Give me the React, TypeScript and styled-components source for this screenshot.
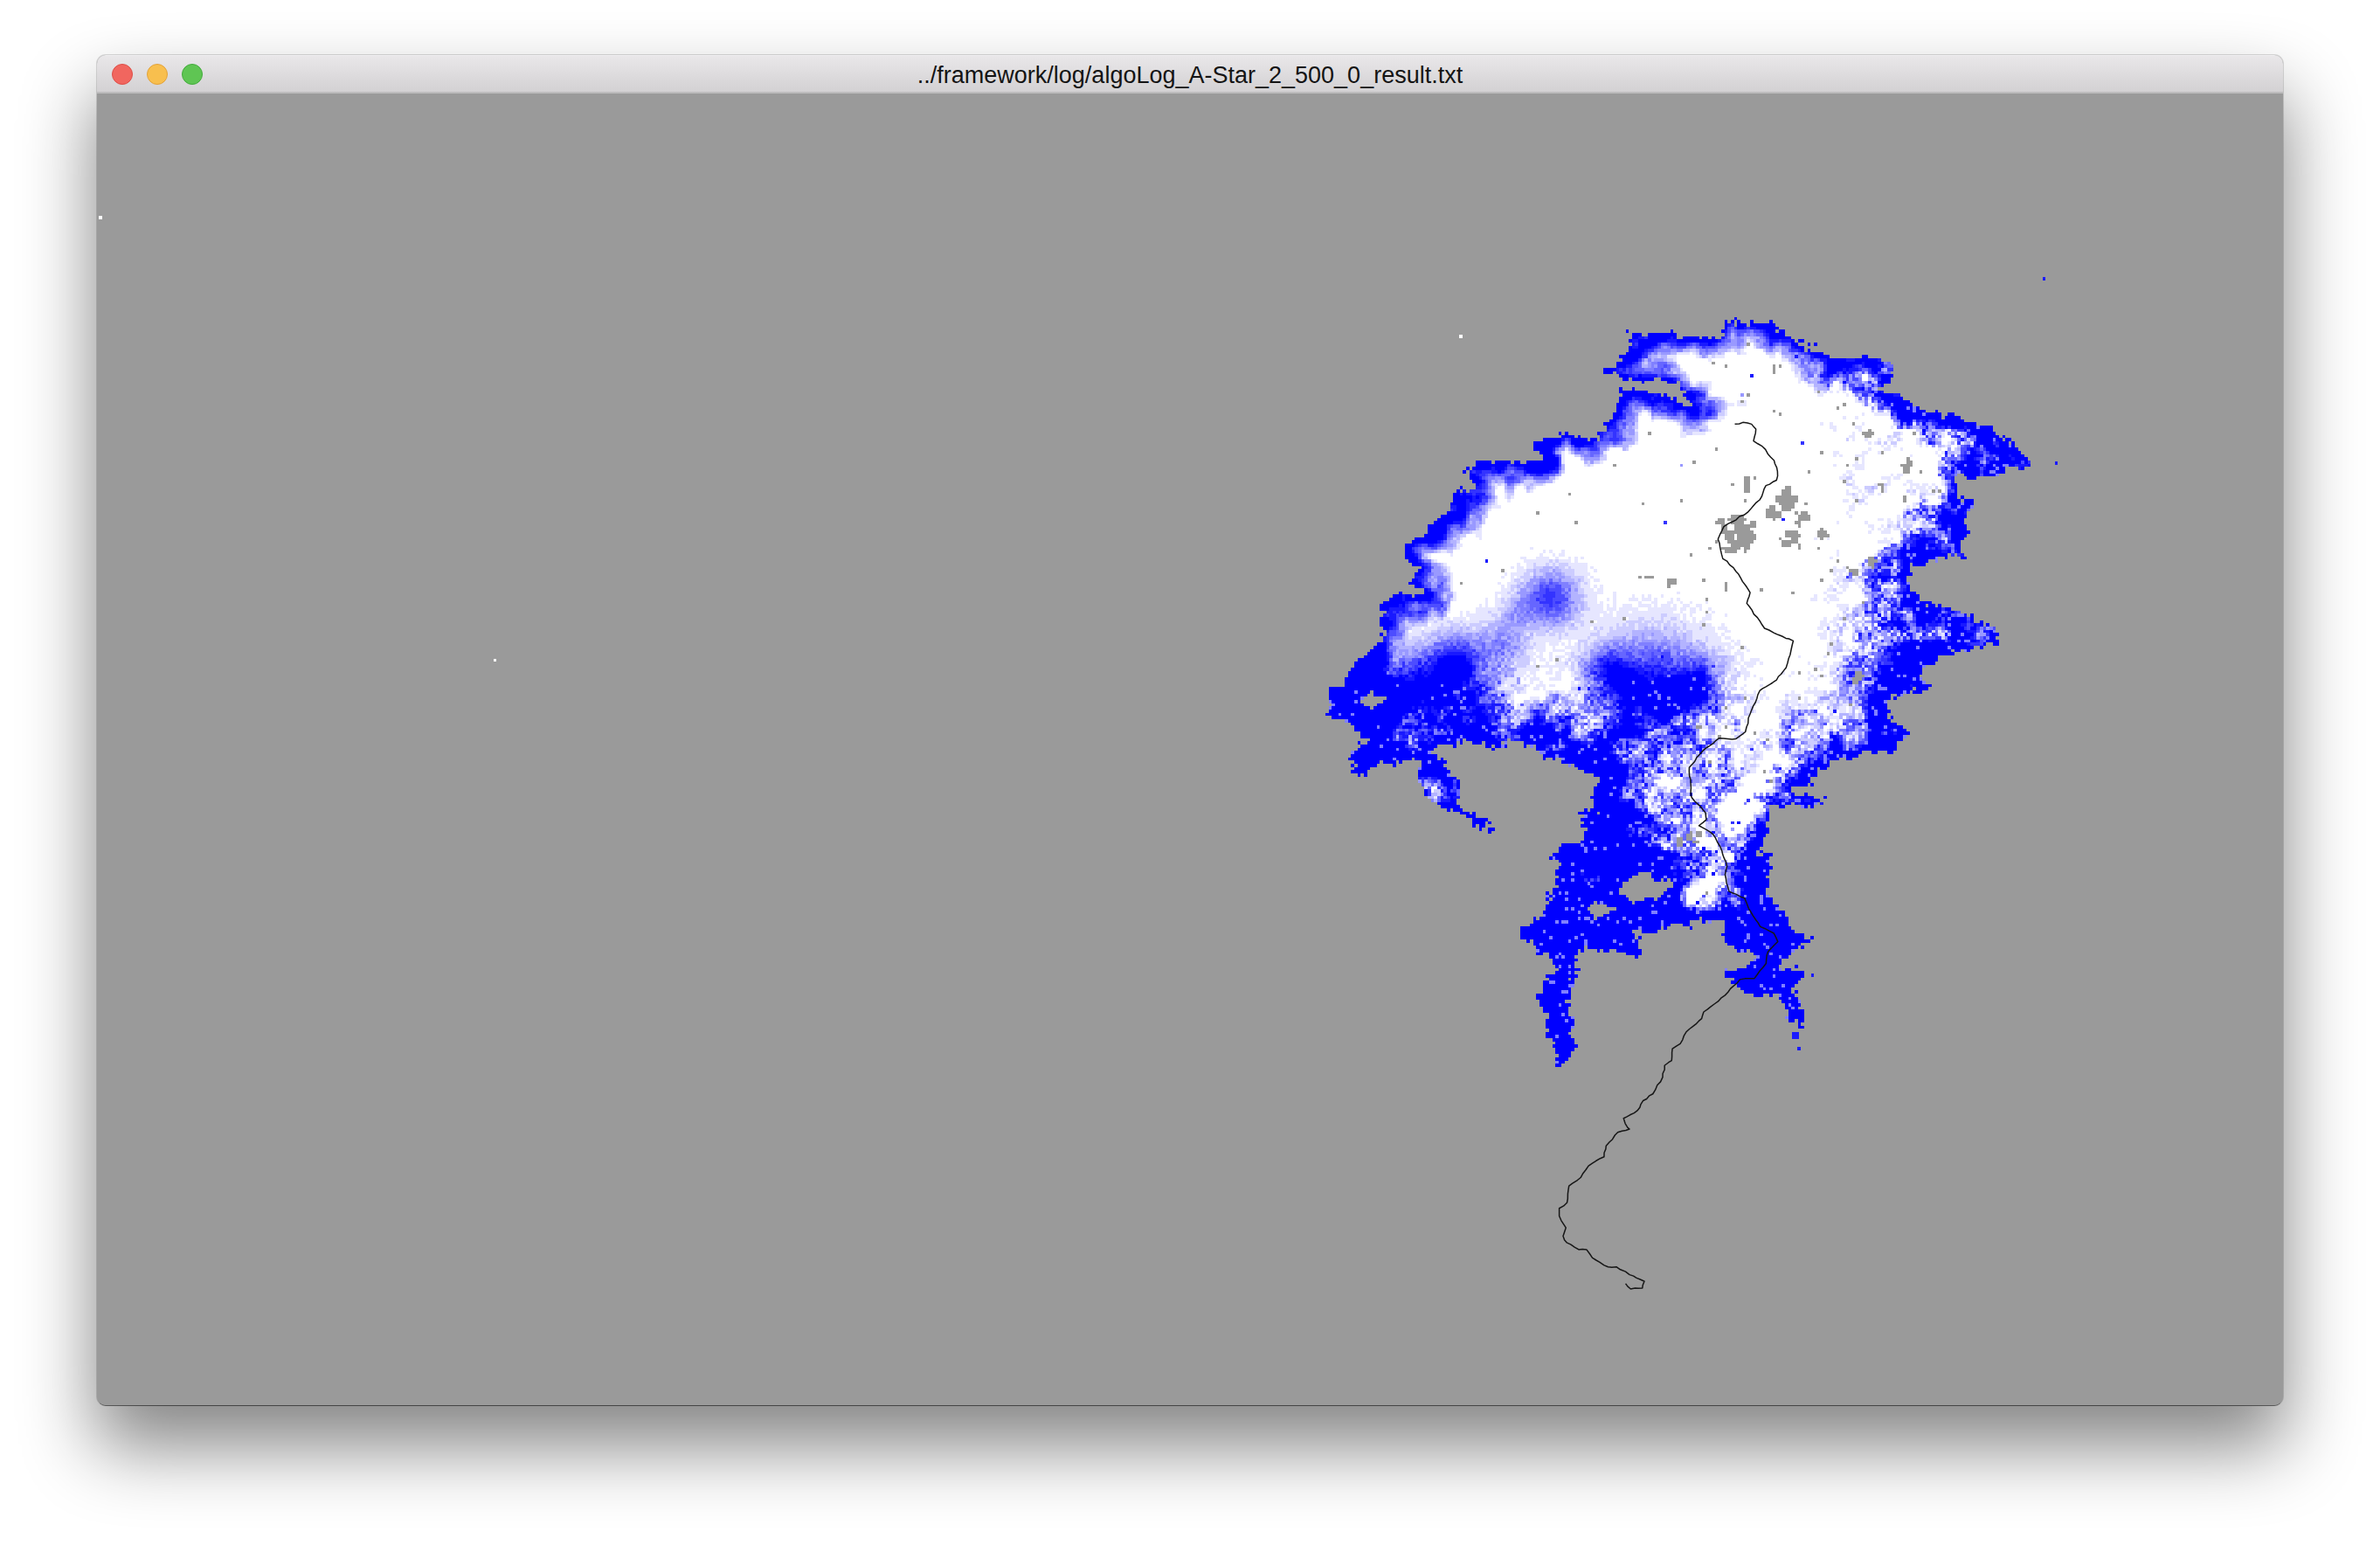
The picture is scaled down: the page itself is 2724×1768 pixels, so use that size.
import React from "react";
import styled, { createGlobalStyle } from "styled-components";

const GlobalStyle = createGlobalStyle`
  html, body { margin: 0; padding: 0; background: #ffffff; }
  #root { width: 2724px; height: 1768px; }
`;

const Page = styled.div`
  box-sizing: border-box;
  width: 2724px;
  height: 1768px;
  padding: 63px 111px 160px;
  background: #ffffff;
  overflow: hidden;
`;

const Window = styled.div`
  display: flex;
  flex-direction: column;
  height: 100%;
  border-radius: 10px;
  overflow: hidden;
  background: #9a9a9a;
  box-shadow: 0 0 0 1px rgba(0, 0, 0, 0.14), 0 2px 0 -1px rgba(0, 0, 0, 0.45),
    0 46px 84px 2px rgba(0, 0, 0, 0.48);
`;

const TitleBar = styled.header`
  flex: none;
  display: grid;
  grid-template-columns: 1fr auto 1fr;
  align-items: center;
  height: 44px;
  box-sizing: border-box;
  padding: 0 17px;
  background: linear-gradient(#e9e7e9, #d3d1d3);
  border-top: 1px solid #efeef0;
  border-bottom: 2px solid #bdbcbd;
`;

const Lights = styled.div`
  display: flex;
  gap: 16px;
`;

const Light = styled.span<{ $fill: string; $edge: string }>`
  box-sizing: border-box;
  width: 24px;
  height: 24px;
  border-radius: 50%;
  background: ${(p) => p.$fill};
  border: 1px solid ${(p) => p.$edge};
`;

const Title = styled.h1`
  margin: 0;
  padding-top: 2px;
  font: 400 27px/30px "Liberation Sans", Arial, sans-serif;
  color: #141414;
  white-space: nowrap;
`;

const Canvas = styled.main`
  flex: 1;
  min-height: 0;
  background: #9a9a9a;
`;

const MapDrawing = styled.svg`
  display: block;
  width: 100%;
  height: 100%;
`;

// ---------- drawing data ----------
type P = [number, number];
const OX = 111;
const OY = 108;
const CELL = 3.65;

const c3 = (x: number, y: number): P => [1500 + (x * 860) / 1568, 340 + (y * 640) / 1568];
const c4 = (x: number, y: number): P => [1500 + (x * 700) / 1568, 900 + (y * 600) / 1568];

const outer: P[] = [
  ...([
    [615,200],[660,170],[665,110],[720,105],[800,115],[850,115],[870,80],[960,70],[1010,125],[1050,150],[1090,175],[1160,170],[1210,190],[1220,235],[1190,265],[1250,300],[1300,325],[1380,345],[1440,395],[1500,445],[1505,470],[1450,480],[1420,510],[1350,505],[1350,560],[1370,580],[1360,625],[1360,740],[1320,740],[1270,745],[1240,790],[1260,840],[1310,870],[1380,900],[1430,925],[1430,970],[1370,985],[1310,1020],[1260,1060],[1280,1100],[1210,1130],[1210,1190],[1250,1220],[1205,1270],[1100,1290],[1070,1330],[1010,1385],[1080,1420],[960,1440],[940,1560],
  ] as P[]).map(([x, y]) => c3(x, y)),
  ...([
    [1170,200],[1175,290],[1165,320],[1210,370],[1225,420],[1290,455],[1270,480],[1215,510],[1210,550],[1260,555],[1235,610],[1255,660],[1270,705],[1245,720],[1220,680],[1190,630],[1150,640],[1095,610],[1065,560],[1105,545],[1130,510],[1085,490],[1050,450],[1055,405],[1000,390],[970,420],[920,425],[885,430],[830,440],[845,510],[790,490],[740,480],[685,490],[680,530],[690,545],[670,580],[670,760],[680,785],[640,830],[610,770],[600,690],[590,620],[600,560],[635,550],[590,500],[545,440],[585,400],[610,350],[625,290],[640,260],[610,215],[650,180],[690,170],[695,130],[690,80],[725,70],
  ] as P[]).map(([x, y]) => c4(x, y)),
  ...([
    [590,1400],[600,1340],[510,1300],[430,1250],[410,1260],[300,1250],[250,1280],[275,1300],[310,1380],[300,1420],[385,1495],[375,1500],[300,1440],[250,1410],[225,1360],[225,1310],[190,1300],[130,1300],[120,1345],[90,1340],[100,1310],[70,1300],[120,1240],[80,1200],[30,1175],[40,1110],[90,1040],[130,1000],[150,920],[140,850],[200,840],[240,835],[205,800],[220,760],[195,715],[240,660],[290,600],[305,550],[335,530],[310,475],[380,465],[490,460],[470,420],[530,380],[580,410],[620,370],[630,320],[650,265],[740,270],[770,300],[800,325],[810,325],[790,295],[750,240],[660,225],[615,210],
  ] as P[]).map(([x, y]) => c3(x, y)),
];

const holes: P[][] = [
  ([[830,255],[870,250],[880,275],[925,285],[880,330],[830,350],[810,340],[780,320],[800,280]] as P[]).map(([x, y]) => c4(x, y)),
  ([[720,340],[770,365],[790,370],[730,400],[710,380]] as P[]).map(([x, y]) => c4(x, y)),
  ([[125,1110],[145,1125],[125,1145],[108,1125]] as P[]).map(([x, y]) => c3(x, y)),
];

const blob = (p: P, r: number, s: number) => ({ x: p[0], y: p[1], r, s });
const blobs = [
  blob(c3(500, 845), 22, 0.8),
  blob(c3(430, 880), 14, 0.25),
  blob(c3(300, 1035), 24, 1.0),
  blob(c3(400, 970), 20, 0.4),
  blob(c3(710, 1130), 44, 1.2),
  blob(c3(810, 1090), 20, 0.55),
  blob(c3(620, 1050), 18, 0.6),
  blob(c3(100, 1170), 36, 1.4),
  blob(c3(170, 1120), 32, 0.7),
  blob(c3(250, 1130), 26, 0.5),
  blob(c3(340, 1180), 28, 0.85),
  blob(c3(480, 1210), 20, 0.7),
  blob(c3(600, 1290), 24, 0.8),
  blob(c3(1190, 1110), 30, 0.8),
  blob(c3(1230, 960), 34, 0.6),
  blob(c3(1300, 680), 22, 0.6),
  blob(c3(1390, 440), 30, 0.55),
  blob(c3(1180, 780), 18, 0.4),
  blob(c3(1040, 1270), 24, 0.6),
  blob(c3(850, 1370), 20, 0.4),
  blob(c3(620, 1470), 30, 0.8),
  blob(c4(640, 410), 56, 1.6),
  blob(c4(1140, 460), 40, 0.95),
  blob(c4(760, 190), 40, 0.6),
  blob(c4(880, 130), 26, 0.35),
  blob(c4(1150, 240), 26, 0.65),
  blob(c4(850, 390), 26, 0.85),
  blob(c4(1230, 600), 44, 1.5),
  blob(c4(660, 650), 50, 1.5),
  blob(c4(1000, 190), 24, 0.35),
  blob(c4(1040, 230), 14, -0.3),
  blob(c4(1100, 60), 20, -0.4),
  blob(c4(990, 310), 14, -0.5),
];

const grayBlobs = [
  blob(c3(885, 660), 26, 1), blob(c3(990, 565), 15, 1), blob(c3(1000, 680), 16, 0.85),
  blob(c3(965, 605), 9, 1), blob(c3(1025, 630), 11, 0.9), blob(c3(908, 525), 12, 0.8),
  blob(c3(1070, 665), 9, 0.8), blob(c3(1188, 540), 7, 0.9), blob(c3(1160, 385), 7, 0.8),
  blob(c3(745, 800), 10, 0.7), blob(c3(705, 790), 6, 0.8), blob(c3(815, 795), 4, 1),
  blob(c3(1130, 765), 9, 0.8), blob(c3(1165, 745), 10, 0.7), blob(c3(970, 205), 5, 0.9),
  blob(c3(830, 232), 4, 1), blob(c3(1240, 470), 10, 0.7), blob(c3(1140, 1070), 9, 0.8),
  blob(c3(805, 1200), 10, 0.7), blob(c4(980, 150), 9, 1), blob(c4(945, 165), 5, 0.9),
];

const hash = (x: number, y: number, k = 0) => {
  const s = Math.sin(x * 127.1 + y * 311.7 + k * 74.7) * 43758.5453;
  return s - Math.floor(s);
};
const valueNoise = (x: number, y: number, k: number) => {
  const xi = Math.floor(x), yi = Math.floor(y);
  const fx = x - xi, fy = y - yi;
  const u = fx * fx * (3 - 2 * fx), v = fy * fy * (3 - 2 * fy);
  const a = hash(xi, yi, k), b = hash(xi + 1, yi, k), c = hash(xi, yi + 1, k), d = hash(xi + 1, yi + 1, k);
  return a + (b - a) * u + (c - a) * v + (a - b - c + d) * u * v;
};
const smoothstep = (a: number, b: number, v: number) => {
  const t = Math.max(0, Math.min(1, (v - a) / (b - a)));
  return t * t * (3 - 2 * t);
};

const polyTest = (poly: P[], x: number, y: number) => {
  let inside = false;
  let best = Infinity;
  for (let i = 0, j = poly.length - 1; i < poly.length; j = i++) {
    const [ax, ay] = poly[j];
    const [bx, by] = poly[i];
    if (by > y !== ay > y && x < ((ax - bx) * (y - by)) / (ay - by) + bx) inside = !inside;
    const dx = ax - bx, dy = ay - by;
    const t = Math.max(0, Math.min(1, ((x - bx) * dx + (y - by) * dy) / (dx * dx + dy * dy)));
    const ex = bx + t * dx - x, ey = by + t * dy - y;
    const d2 = ex * ex + ey * ey;
    if (d2 < best) best = d2;
  }
  return inside ? Math.sqrt(best) : -Math.sqrt(best);
};

const LEVELS = 10;

const buildCells = () => {
  const fills: string[][] = Array.from({ length: LEVELS + 1 }, () => []);
  const gray: string[] = [];
  const rect = (gx: number, gy: number) => {
    const x = (gx * CELL).toFixed(2);
    const y = (gy * CELL).toFixed(2);
    return `M${x} ${y}h${CELL}v${CELL}h-${CELL}z`;
  };
  const xs = outer.map((p) => p[0]);
  const ys = outer.map((p) => p[1]);
  const gx0 = Math.floor((Math.min(...xs) - OX - 14) / CELL);
  const gx1 = Math.ceil((Math.max(...xs) - OX + 14) / CELL);
  const gy0 = Math.floor((Math.min(...ys) - OY - 14) / CELL);
  const gy1 = Math.ceil((Math.max(...ys) - OY + 14) / CELL);
  for (let gy = gy0; gy <= gy1; gy++) {
    for (let gx = gx0; gx <= gx1; gx++) {
      const x = OX + (gx + 0.5) * CELL;
      const y = OY + (gy + 0.5) * CELL;
      let sd = polyTest(outer, x, y);
      if (sd < -14) continue;
      for (const h of holes) sd = Math.min(sd, -polyTest(h, x, y));
      const ragged =
        sd +
        (valueNoise(x / 13, y / 13, 1) - 0.5) * 10 +
        (valueNoise(x / 5, y / 5, 12) - 0.5) * 6 +
        (hash(gx, gy, 2) - 0.5) * 5;
      if (ragged <= 0) continue;
      const speck = Math.max(smoothstep(720, 860, y), smoothstep(2040, 2160, x));
      const wide = 0.6 + 0.8 * valueNoise(x / 40, y / 40, 3);
      const depth = sd * wide + (valueNoise(x / 11, y / 11, 10) - 0.5) * 20;
      let v = Math.max(0, Math.min(1.1, (32 - depth) / 26));
      let g = 0;
      for (const b of blobs) {
        const dx = x - b.x, dy = y - b.y;
        const q = (dx * dx + dy * dy) / (2 * b.r * b.r);
        if (q < 8) v += b.s * Math.exp(-q);
      }
      for (const b of grayBlobs) {
        const dx = x - b.x, dy = y - b.y;
        const q = (dx * dx + dy * dy) / (b.r * b.r);
        if (q < 1) g = Math.max(g, b.s * (1.1 - 0.5 * q));
      }
      v += (valueNoise(x / 14, y / 14, 11) - 0.5) * 1.0 * speck * (v > 0.08 ? 1 : 0.25);
      const n = hash(gx, gy, 4) - 0.5;
      const clamped = Math.max(0, Math.min(1, v));
      const amp = 0.06 + (0.6 + 2.6 * speck) * clamped * (1 - clamped);
      let out = v + n * amp;
      if (hash(gx, gy, 5) < 0.001 + 0.1 * speck * smoothstep(0.02, 0.4, clamped + 0.2 * smoothstep(820, 1000, y))) {
        out = Math.max(out, 0.35 + 0.65 * hash(gx, gy, 14));
      }
      if (clamped > 0.75 && hash(gx, gy, 15) < 0.06 * speck) out = 0.45;
      const pick = 0.35 + 1.1 * valueNoise(x / 6, y / 6, 6);
      const sparse = clamped < 0.15 && hash(gx, gy, 7) < (x > 1950 && y < 900 ? 0.012 : 0.004);
      if (g * pick > 0.68 || sparse) {
        gray.push(rect(gx, gy));
        continue;
      }
      const level = Math.round(Math.max(0, Math.min(1, out)) * LEVELS);
      fills[level].push(rect(gx, gy));
    }
  }
  return { fills: fills.map((f) => f.join("")), gray: gray.join("") };
};

const smoothPath = (pts: P[]) => {
  const out: P[] = [];
  pts.forEach((p, i) => {
    const q = pts[i + 1];
    if (!q) {
      out.push(p);
      return;
    }
    const len = Math.hypot(q[0] - p[0], q[1] - p[1]);
    const steps = Math.max(1, Math.round(len / 5));
    for (let s = 0; s < steps; s++) {
      const t = s / steps;
      const jx = s === 0 ? 0 : (hash(i, s, 8) - 0.5) * 1.4;
      const jy = s === 0 ? 0 : (hash(i, s, 9) - 0.5) * 1.4;
      out.push([p[0] + (q[0] - p[0]) * t + jx, p[1] + (q[1] - p[1]) * t + jy]);
    }
  });
  return out.map(([x, y]) => `${(x - OX).toFixed(1)},${(y - OY).toFixed(1)}`).join(" ");
};

const route: P[] = [
  ...([
    [883,358],[900,353],[918,358],[927,372],[922,405],[940,420],[965,460],[972,490],[970,515],[948,530],[935,570],[910,605],[860,645],[848,680],[858,735],[880,760],[915,830],[908,860],[945,930],[965,943],[1005,965],[990,1040],[970,1075],[935,1105],[915,1170],[905,1220],[885,1240],[850,1238],[815,1275],[788,1320],[792,1400],
  ] as P[]).map(([x, y]) => c3(x, y)),
  ...([
    [975,35],[1010,80],[1012,100],[993,118],[1030,145],[1047,180],[1065,240],[1060,265],[1070,315],[1110,335],[1120,365],[1150,420],[1185,440],[1195,465],[1170,495],[1165,530],[1135,575],[1098,578],[1060,625],[1005,675],[1000,695],[960,735],[945,770],[925,785],[923,820],[905,835],[900,870],[875,920],[850,940],[835,970],[800,993],[810,1020],[815,1025],[785,1035],[755,1075],[750,1108],[710,1135],[690,1170],[660,1195],[655,1245],[635,1262],[635,1285],[652,1320],[645,1345],[655,1365],[685,1385],[705,1385],[720,1410],[760,1437],[782,1437],[815,1460],[853,1480],[848,1500],[818,1503],[805,1487],
  ] as P[]).map(([x, y]) => c4(x, y)),
];

const whiteDots: P[] = [[115, 250], [1671, 386], [566, 756]];
const blueDots: P[] = [[2338, 320], [2352, 531], [2073, 1116], [2058, 1200], [2052, 1183], [2056, 1183], [2052, 1187], [2056, 1187]];

const { fills, gray } = buildCells();
const routePoints = smoothPath(route);

const levelColor = (l: number) => {
  const c = Math.round(255 * (1 - l / LEVELS));
  return `rgb(${c},${c},255)`;
};

const dotPath = (dots: P[]) =>
  dots.map(([x, y]) => `M${x - OX - 1.8} ${y - OY - 1.8}h3.65v3.65h-3.65z`).join("");

export default function App() {
  return (
    <Page>
      <GlobalStyle />
      <Window>
        <TitleBar>
          <Lights>
            <Light $fill="#f1665f" $edge="#dd4f48" />
            <Light $fill="#f8bf4e" $edge="#e2a23a" />
            <Light $fill="#5fc553" $edge="#43ab3c" />
          </Lights>
          <Title>../framework/log/algoLog_A-Star_2_500_0_result.txt</Title>
          <span />
        </TitleBar>
        <Canvas>
          <MapDrawing viewBox="0 0 2502 1500" preserveAspectRatio="xMinYMin slice" shapeRendering="crispEdges">
            {fills.map((d, i) => d && <path key={i} d={d} fill={levelColor(i)} />)}
            <path d={gray} fill="#9a9a9a" />
            <path d={dotPath(whiteDots)} fill="#ffffff" />
            <path d={dotPath(blueDots)} fill="#1a1aff" />
            <polyline
              points={routePoints}
              fill="none"
              stroke="#161616"
              strokeWidth={1.5}
              strokeLinejoin="round"
              shapeRendering="geometricPrecision"
            />
          </MapDrawing>
        </Canvas>
      </Window>
    </Page>
  );
}
